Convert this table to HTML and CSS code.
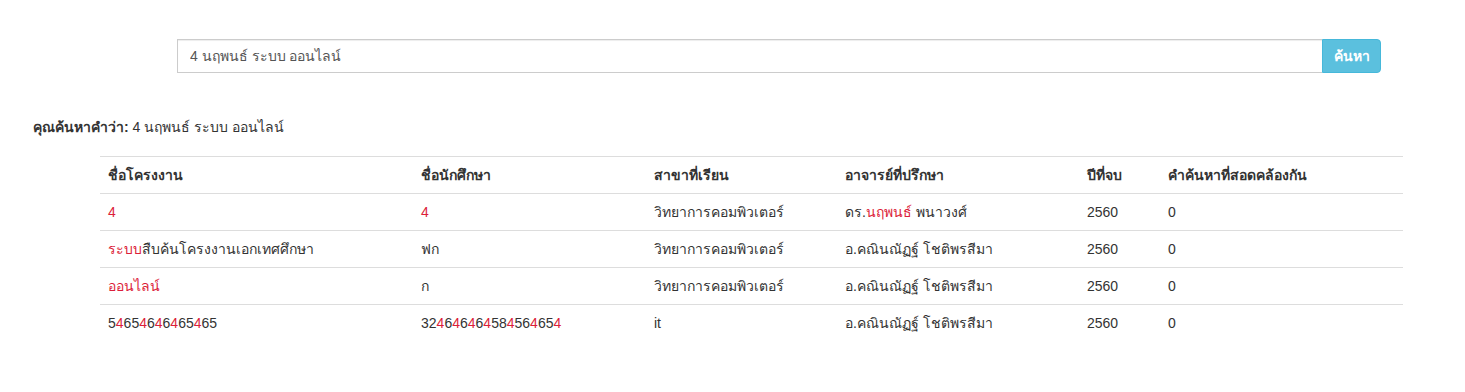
FILE: index.html
```html
<!DOCTYPE html>
<html lang="th">
<head>
<meta charset="utf-8">
<title>ค้นหาโครงงาน</title>
<link rel="stylesheet" href="styles.css">
</head>
<body>
<form class="search-bar">
  <input class="search-input" type="text" value="4 นฤพนธ์ ระบบ ออนไลน์">
  <button class="search-btn" type="button">ค้นหา</button>
</form>
<p class="result-label"><b>คุณค้นหาคำว่า:</b> 4 นฤพนธ์ ระบบ ออนไลน์</p>
<table class="results">
  <thead>
    <tr>
      <th class="c1">ชื่อโครงงาน</th>
      <th class="c2">ชื่อนักศึกษา</th>
      <th class="c3">สาขาที่เรียน</th>
      <th class="c4">อาจารย์ที่ปรึกษา</th>
      <th class="c5">ปีที่จบ</th>
      <th class="c6">คำค้นหาที่สอดคล้องกัน</th>
    </tr>
  </thead>
  <tbody>
    <tr>
      <td><span class="hl">4</span></td>
      <td><span class="hl">4</span></td>
      <td>วิทยาการคอมพิวเตอร์</td>
      <td>ดร.<span class="hl">นฤพนธ์</span> พนาวงศ์</td>
      <td>2560</td>
      <td>0</td>
    </tr>
    <tr>
      <td><span class="hl">ระบบ</span>สืบค้นโครงงานเอกเทศศึกษา</td>
      <td>ฟก</td>
      <td>วิทยาการคอมพิวเตอร์</td>
      <td>อ.คณินณัฏฐ์ โชติพรสีมา</td>
      <td>2560</td>
      <td>0</td>
    </tr>
    <tr>
      <td><span class="hl">ออนไลน์</span></td>
      <td>ก</td>
      <td>วิทยาการคอมพิวเตอร์</td>
      <td>อ.คณินณัฏฐ์ โชติพรสีมา</td>
      <td>2560</td>
      <td>0</td>
    </tr>
    <tr>
      <td>5<span class="hl">4</span>65<span class="hl">4</span>6<span class="hl">4</span>6<span class="hl">4</span>65<span class="hl">4</span>65</td>
      <td>32<span class="hl">4</span>6<span class="hl">4</span>6<span class="hl">4</span>6<span class="hl">4</span>58<span class="hl">4</span>56<span class="hl">4</span>65<span class="hl">4</span></td>
      <td>it</td>
      <td>อ.คณินณัฏฐ์ โชติพรสีมา</td>
      <td>2560</td>
      <td>0</td>
    </tr>
  </tbody>
</table>
</body>
</html>
```
FILE: styles.css
```css
html, body {
  margin: 0;
  padding: 0;
  background: #fff;
}
body {
  font-family: "Liberation Sans", Arial, "Noto Sans", sans-serif;
  font-size: 14px;
  line-height: 20px;
  color: #333;
}
.search-bar {
  display: flex;
  margin: 0;
  padding: 39px 84px 0 177px;
}
.search-input {
  flex: 1;
  height: 34px;
  box-sizing: border-box;
  border: 1px solid #ccc;
  border-right: 0;
  border-radius: 0;
  padding: 6px 12px;
  font: inherit;
  color: #555;
  outline: none;
  box-shadow: inset 0 1px 1px rgba(0,0,0,.075);
}
.search-btn {
  width: 59px;
  height: 34px;
  box-sizing: border-box;
  border: 1px solid #46b8da;
  border-radius: 0 4px 4px 0;
  background: #5bc0de;
  color: #fff;
  font: inherit;
  font-weight: bold;
  padding: 6px 8px;
}
.result-label {
  margin: 44px 0 0 33px;
}
.results {
  margin: 19px 0 0 100px;
  width: 1303px;
  border-collapse: collapse;
  border-spacing: 0;
}
.results th,
.results td {
  text-align: left;
  padding: 8px;
  border-top: 1px solid #ddd;
  vertical-align: top;
}
.results th {
  font-weight: bold;
  border-bottom: 1px solid #ddd;
}
.c1 { width: 297px; }
.c2 { width: 217px; }
.c3 { width: 175px; }
.c4 { width: 226px; }
.c5 { width: 65px; }
.hl {
  color: #dc1e3a;
}
```
